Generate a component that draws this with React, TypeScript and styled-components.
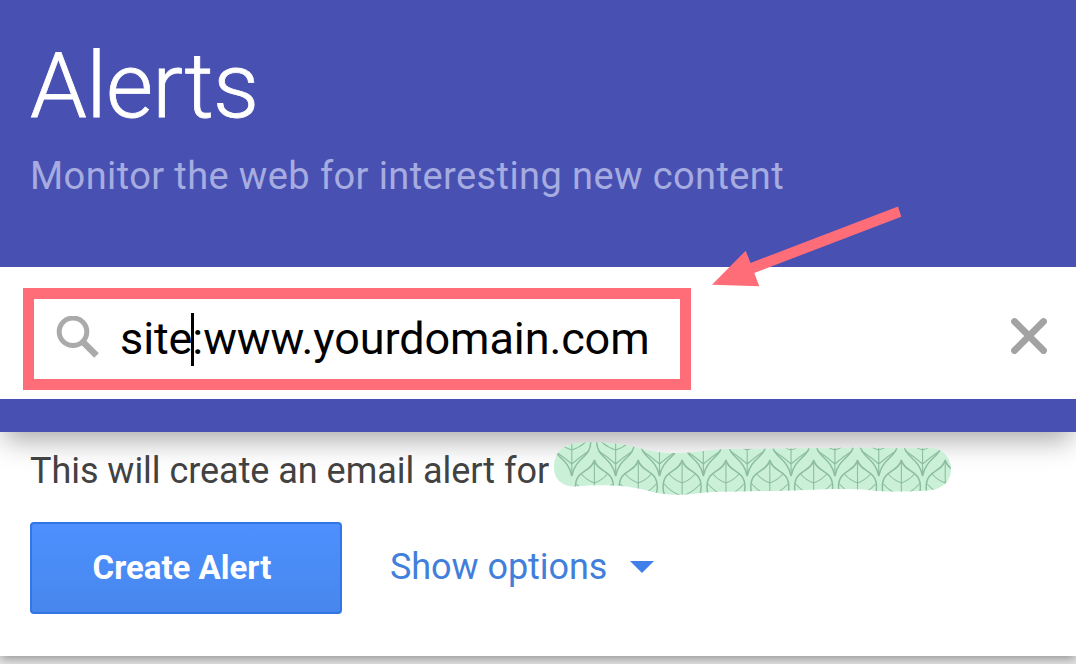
import styled, { createGlobalStyle } from 'styled-components';

const GlobalStyle = createGlobalStyle`
  * {
    box-sizing: border-box;
  }

  body {
    margin: 0;
    background-color: #e4e4e4;
    font-family: Roboto, 'Liberation Sans', sans-serif;
    overflow: hidden;
  }
`;

const Page = styled.main`
  display: flex;
  flex-direction: column;
  position: relative;
  width: 1076px;
  height: 664px;
  overflow: hidden;
`;

const Header = styled.header`
  position: relative;
  z-index: 1;
  height: 432px;
  padding-bottom: 33px;
  background-color: #4851b2;
  box-shadow: 0 12px 26px -4px rgba(0, 0, 0, 0.34);
`;

const Intro = styled.div`
  height: 267px;
  padding: 33px 30px 0;
`;

const Title = styled.h1`
  margin: 0;
  color: #fff;
  font-size: 91px;
  font-weight: 300;
  line-height: 106px;
  letter-spacing: -0.7px;
  white-space: nowrap;
  -webkit-text-stroke: 0.8px #fff;
`;

const Subtitle = styled.p`
  margin: 15px 0 0;
  color: #a6ace0;
  font-size: 38px;
  line-height: 44px;
  letter-spacing: 0.4px;
  white-space: nowrap;
`;

const SearchBar = styled.div`
  display: flex;
  align-items: center;
  justify-content: space-between;
  height: 132px;
  padding: 0 27px 0 23px;
  background-color: #fff;
`;

const SearchField = styled.div`
  display: flex;
  align-items: center;
  gap: 20px;
  width: 668px;
  height: 102px;
  margin-top: 12px;
  padding-left: 19px;
  border: 11px solid #ff6d78;
`;

const Query = styled.span`
  color: #000;
  font-size: 45px;
  line-height: 53px;
  letter-spacing: -0.1px;
  white-space: nowrap;
`;

const Caret = styled.span`
  display: inline-block;
  width: 3px;
  height: 53px;
  margin: -7px -1.5px 0;
  vertical-align: middle;
  background-color: #000;
`;

const ClearButton = styled.button`
  display: flex;
  padding: 0;
  border: 0;
  margin-top: 6px;
  background: none;
`;

const Card = styled.section`
  height: 224px;
  padding: 6px 30px 0;
  background-color: #fff;
  box-shadow: 0 4px 9px -1px rgba(0, 0, 0, 0.34);
`;

const Delivery = styled.div`
  display: flex;
  position: relative;
  z-index: 2;
  height: 84px;
`;

const DeliveryText = styled.span`
  width: 522px;
  padding-top: 11px;
  color: #424242;
  font-size: 36px;
  line-height: 44px;
  letter-spacing: -0.04px;
  white-space: nowrap;
`;

const Actions = styled.div`
  display: flex;
  align-items: center;
  gap: 48px;
`;

const CreateButton = styled.button`
  width: 312px;
  height: 92px;
  padding: 0 8px 2px 0;
  border: 2px solid #3276e6;
  border-radius: 4px;
  color: #fff;
  font-family: inherit;
  font-size: 33px;
  font-weight: 700;
  background-image: linear-gradient(#4d90fe, #4787ed);
`;

const OptionsButton = styled.button`
  display: flex;
  align-items: center;
  gap: 22px;
  padding: 0 0 3px;
  border: 0;
  color: #427fdb;
  font-family: inherit;
  font-size: 36px;
  line-height: 44px;
  letter-spacing: -0.05px;
  white-space: nowrap;
  background: none;
`;

const Arrow = styled.svg`
  position: absolute;
  z-index: 3;
  top: 200px;
  left: 705px;
`;

const SearchIcon = () => (
  <svg width="47" height="47" viewBox="53 315.500 47 47" fill="none" stroke="#aaa">
    <circle cx="73" cy="331.3" r="13.8" strokeWidth="5" />
    <path d="M83.5 342 96.5 355" strokeWidth="6.6" />
  </svg>
);

const ClearIcon = () => (
  <svg width="40" height="40" viewBox="0 0 40 40">
    <path
      d="M5.5 5.5 34.5 34.5M34.5 5.5 5.5 34.5"
      stroke="#a3a3a3"
      strokeWidth="6.8"
      strokeLinecap="round"
    />
  </svg>
);

// Brush stroke over the address, filled with a repeated leaf
const HiddenAddress = () => (
  <svg width="402" height="60" viewBox="552 438 402 60">
    <defs>
      <clipPath id="stroke">
        <path d="M554 468C554 455 560 445 578 443C595 441 620 443 635 447C650 451 660 453 675 453C700 453 705 449 735 449L830 448C865 447 915 449 930 448C943 448 951 458 951 469C951 482 941 490 927 490.500C905 492 885 492 868 490C840 487 800 491 760 491C735 492 715 491 700 493C680 496 660 495 645 490C620 484 595 485 576 486.500C562 487 554 479 554 468Z" />
      </clipPath>
      <g id="leaf" fill="none" stroke="#8dbc9f">
        <path
          d="M0 0C-3 13-19 9-19 27C-19 45-4 42 0 62C4 42 19 45 19 27C19 9 3 13 0 0Z"
          strokeWidth="1.5"
        />
        <path
          d="M0 2V60M0 23Q-8 20-13 14M0 36Q-10 33-18 24M0 50Q-8 43-17 37M0 23Q8 20 13 14M0 36Q10 33 18 24M0 50Q8 43 17 37"
          strokeWidth="1.1"
        />
      </g>
    </defs>
    <g clipPath="url(#stroke)">
      <rect x="552" y="438" width="402" height="60" fill="#caf1d8" />
      {Array.from({ length: 10 }, (_, i) => (
        <g key={i}>
          <use href="#leaf" x={571.8 + i * 43.85} y={414} />
          <use href="#leaf" x={594.4 + i * 43.85} y={460} />
        </g>
      ))}
    </g>
  </svg>
);

const App: React.FC = (): JSX.Element => {
  return (
    <>
      <GlobalStyle />
      <Page>
        <Header>
          <Intro>
            <Title>Alerts</Title>
            <Subtitle>Monitor the web for interesting new content</Subtitle>
          </Intro>
          <SearchBar>
            <SearchField>
              <SearchIcon />
              <Query>
                site
                <Caret />
                :www.yourdomain.com
              </Query>
            </SearchField>
            <ClearButton aria-label="Clear">
              <ClearIcon />
            </ClearButton>
          </SearchBar>
        </Header>
        <Card>
          <Delivery>
            <DeliveryText>This will create an email alert for</DeliveryText>
            <HiddenAddress />
          </Delivery>
          <Actions>
            <CreateButton>Create Alert</CreateButton>
            <OptionsButton>
              Show options
              <svg width="26" height="14" viewBox="0 0 26 14">
                <path d="M1 1H25L13 13Z" fill="#3f80ea" />
              </svg>
            </OptionsButton>
          </Actions>
        </Card>
        <Arrow width="200" height="90" viewBox="705 200 200 90">
          <path
            d="M898 206.500 901.300 216.700 754.300 273 759.300 286.300 712 284.700 745.700 250.700 750.500 263Z"
            fill="#ff6d78"
          />
        </Arrow>
      </Page>
    </>
  );
};

export default App;
